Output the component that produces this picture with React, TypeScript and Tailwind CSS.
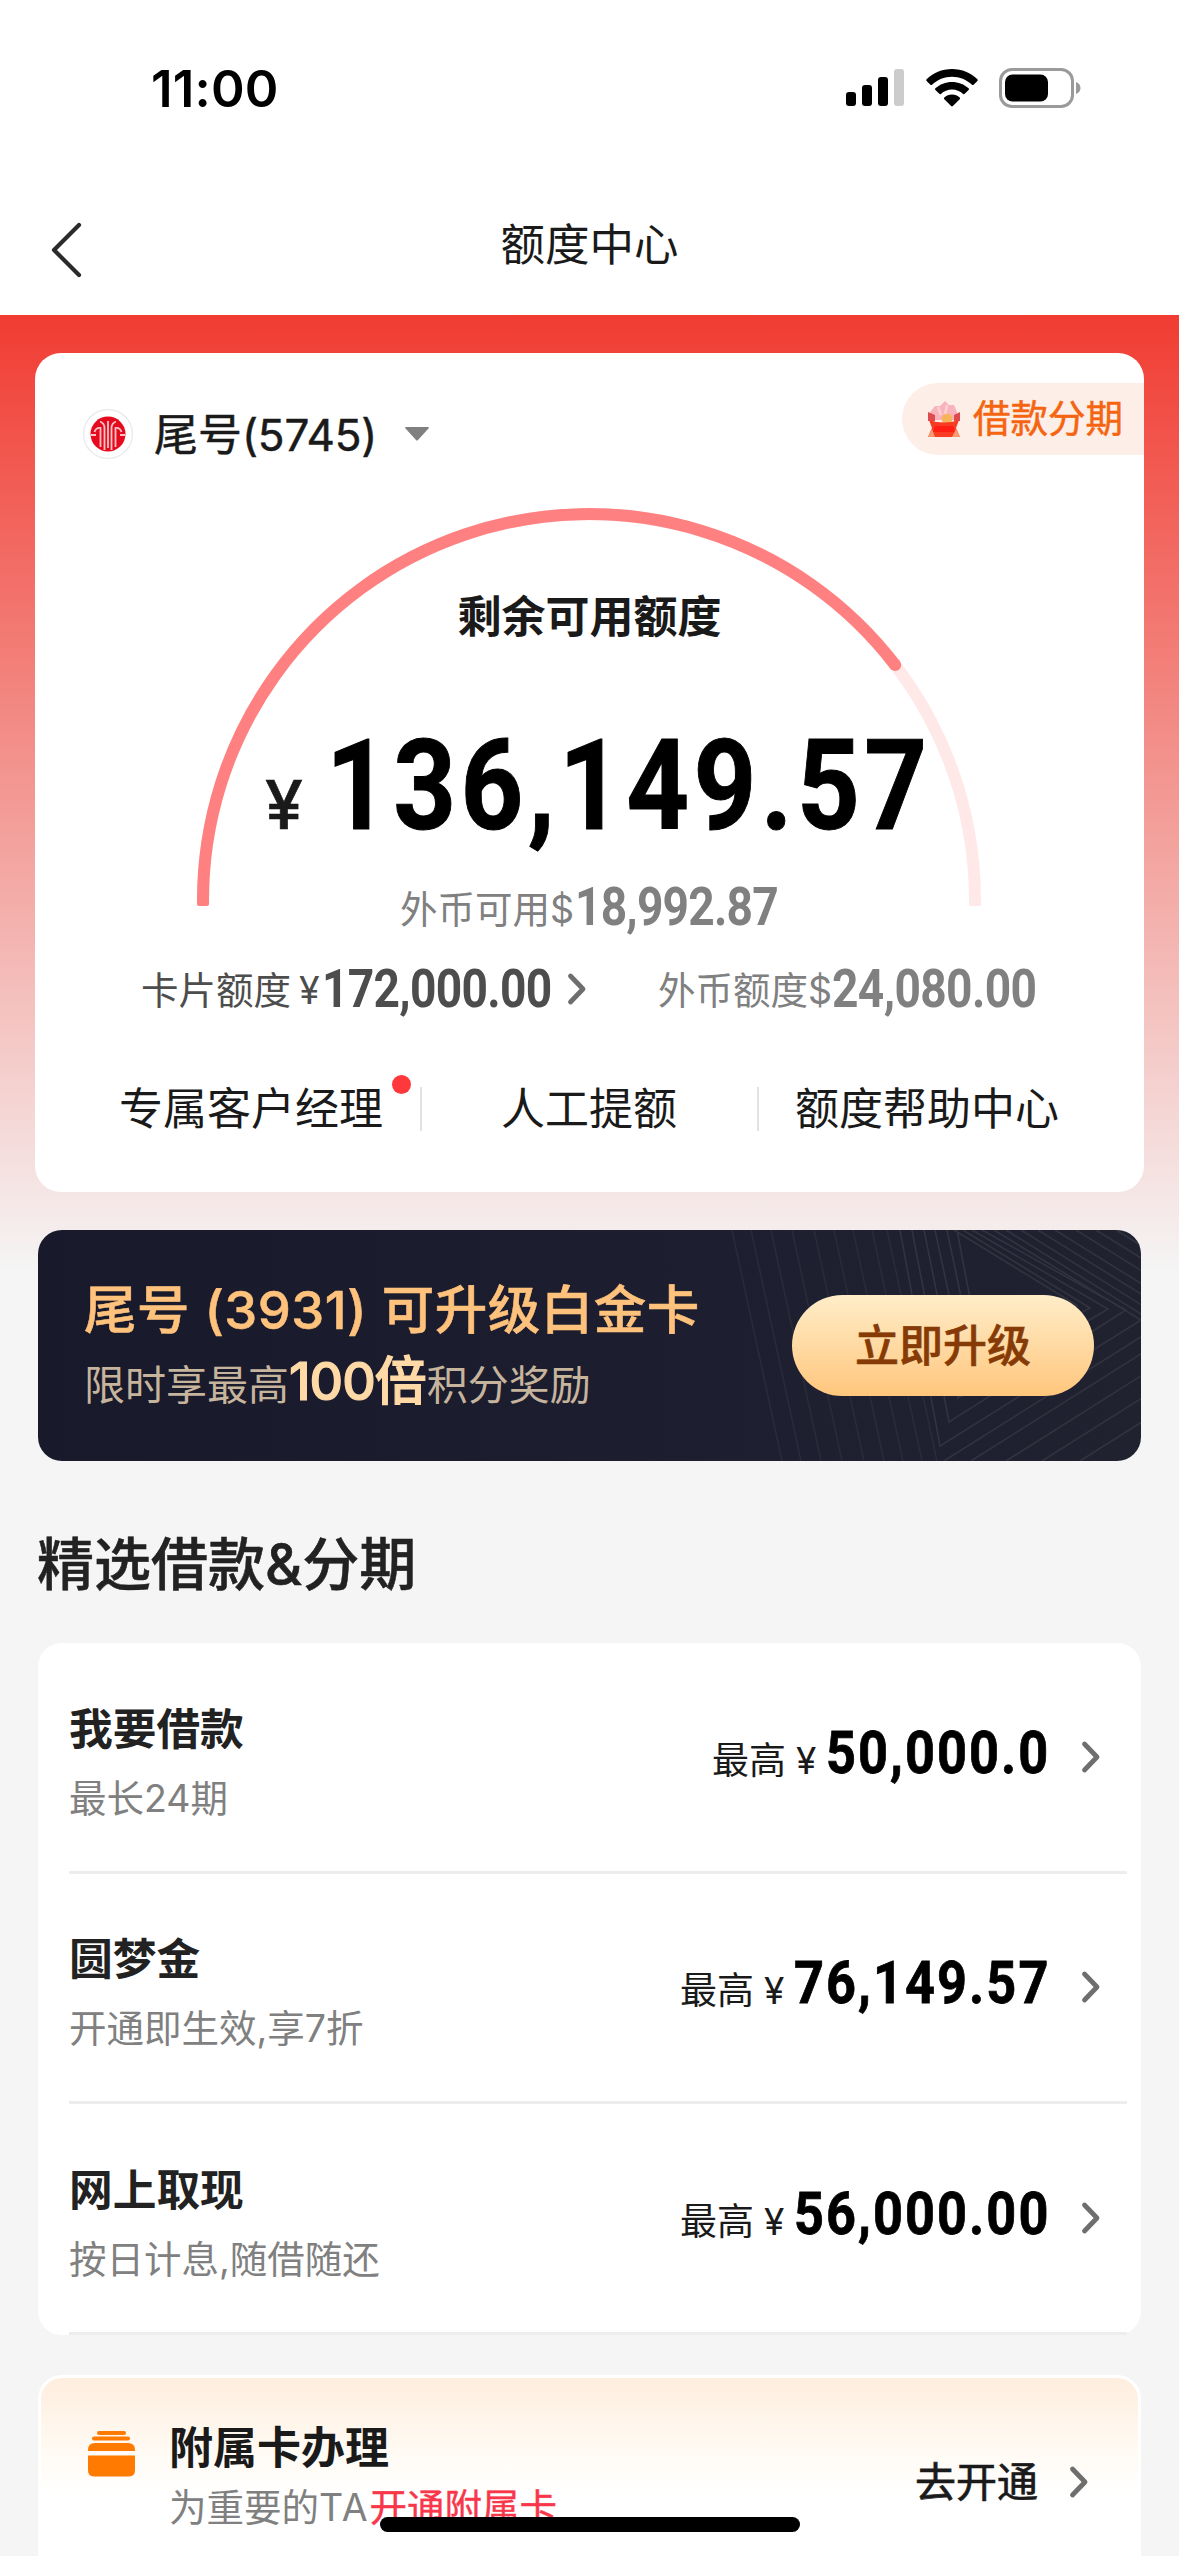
/**
 * 额度中心
 * 状态栏 + 导航栏 + 额度卡片 + 升级横幅 + 借款分期列表 + 附属卡入口
 */
import React from 'react';
import clsx from 'clsx';

interface LoanItem { title: string; desc: string; amount: string; amountClass: string; }

const LOANS: LoanItem[] = [
  { title: '我要借款', desc: '最长24期', amount: '50,000.0', amountClass: 'w-[221px]' },
  { title: '圆梦金', desc: '开通即生效,享7折', amount: '76,149.57', amountClass: 'w-[253px]' },
  { title: '网上取现', desc: '按日计息,随借随还', amount: '56,000.00', amountClass: 'w-[253px]' },
];

/** 横幅背景的斜线，坐标相对横幅左上角 */
const SLANTS = [694, 713, 733, 754, 776, 796, 815, 834, 849];
const RIGHT_TOP = [968, 983, 1000, 1017, 1038, 1058, 1078];
const RIGHT_BOTTOM = [906, 933, 968, 1004, 1042];

/** 数字，横向压窄 */
const Amount: React.FC<{ value: string; className?: string }> = ({ value, className }) => (
  <span className={clsx('block shrink-0 whitespace-nowrap font-[Roboto,sans-serif] font-bold', className)}>
    <span className="inline-block origin-left scale-x-[0.87]">{value}</span>
  </span>
);

const Chevron: React.FC<{ className?: string }> = ({ className }) => (
  <svg viewBox="0 0 20 34" className={clsx('h-[34px] w-[20px] shrink-0', className)} fill="none" stroke="#6e6e6e" strokeWidth="4.800" strokeLinecap="round" strokeLinejoin="round">
    <path d="M3.500 4 L16 17 L3.500 30" />
  </svg>
);

const StatusBar = () => (
  <div className="flex h-[176px] items-center justify-between bg-white pr-[98px] pl-[151px]">
    <span className="text-[51px] leading-none font-semibold tracking-[0.200px] text-black">11:00</span>
    <div className="flex items-center">
      <svg viewBox="0 0 58 38" className="mr-[22px] h-[38px] w-[58px]">
        <rect x="0" y="23" width="10" height="14" rx="3" />
        <rect x="16" y="16" width="10" height="21" rx="3" />
        <rect x="32" y="8" width="10" height="29" rx="3" />
        <rect x="48" y="0" width="10" height="37" rx="3" fill="#cccccc" />
      </svg>
      <svg viewBox="0 0 52 38" className="mr-[21px] h-[38px] w-[52px]">
        <path d="M26 0C36 0 45 3.8 51.4 10.3C51.9 10.8 51.9 11.5 51.4 12L47.6 15.8C47.2 16.2 46.5 16.2 46 15.8C40.6 10.6 33.600 7.700 26 7.700C18.400 7.700 11.400 10.600 6 15.800C5.500 16.200 4.800 16.200 4.400 15.800L.6 12C.1 11.500 .1 10.800 .6 10.300C7 3.800 16 0 26 0Z" />
        <path d="M26 12.900C32.400 12.900 38.200 15.300 42.600 19.300C43.100 19.800 43.100 20.500 42.600 21L38.700 24.800C38.200 25.300 37.600 25.300 37.100 24.900C34.100 22.200 30.200 20.600 26 20.600C21.800 20.600 17.900 22.200 14.900 24.900C14.400 25.300 13.800 25.300 13.300 24.800L9.400 21C8.900 20.500 8.900 19.800 9.400 19.300C13.800 15.300 19.600 12.900 26 12.900Z" />
        <path d="M26 25.600C29 25.600 31.700 26.700 33.700 28.500C34.200 29 34.200 29.700 33.700 30.200L26.900 37C26.400 37.500 25.600 37.500 25.100 37L18.300 30.200C17.800 29.700 17.800 29 18.300 28.500C20.300 26.700 23 25.600 26 25.600Z" />
      </svg>
      <svg viewBox="0 0 82 40" className="h-[40px] w-[82px]">
        <rect x="1.500" y="1.500" width="72" height="37" rx="11.500" fill="none" stroke="#9a9a9a" strokeWidth="3" />
        <rect x="6" y="6.500" width="43" height="27" rx="7.500" />
        <path d="M77 14V26C79.800 25 81.500 22.700 81.500 20C81.500 17.300 79.800 15 77 14Z" fill="#9a9a9a" />
      </svg>
    </div>
  </div>
);

const NavBar = () => (
  <div className="grid h-[139px] grid-cols-[1fr_auto_1fr] items-center bg-white">
    <svg viewBox="0 0 34 58" className="mt-2 ml-[49px] h-[58px] w-[34px]" fill="none" stroke="#2b2b2b" strokeWidth="4.200" strokeLinecap="round" strokeLinejoin="round">
      <path d="M30 4 L5 29 L30 54" />
    </svg>
    <h1 className="text-[44.500px] leading-none text-[#1a1a1a]">额度中心</h1>
  </div>
);

const BankLogo = () => (
  <svg viewBox="0 0 52 52" className="h-[52px] w-[52px] shrink-0">
    <circle cx="26" cy="26" r="24.500" fill="#fff" stroke="#ececf0" strokeWidth="1.500" />
    <circle cx="26" cy="26" r="17.500" fill="#e60a1e" />
    <g fill="none" stroke="#f8c4c6" strokeWidth="1.800">
      <path d="M26 13V40" />
      <path d="M22.500 42V20C22.500 16 20.500 14.500 18 13.500" />
      <path d="M29.500 42V20C29.500 16 31.500 14.500 34 13.500" />
      <path d="M18.500 39V20C15.500 19.500 13.500 21 12.500 24" />
      <path d="M33.500 39V20C36.500 19.500 38.500 21 39.500 24" />
      <path d="M9 27H14M38 27H43" />
    </g>
  </svg>
);

const GiftIcon = () => (
  <svg viewBox="0 0 34 38" className="h-[38px] w-[34px]">
    <path d="M3 12L8 6L13 6L18 1L22 5L27 5L30 12V20H3Z" fill="#f8b4ba" />
    <path d="M11 7L14 15M20 5L18 15" stroke="#fbd0d5" strokeWidth="2.500" />
    <path d="M1 12L8 15V21H1ZM33 12L27 15V21H33Z" fill="#dd4b4e" />
    <circle cx="20" cy="19" r="5.500" fill="#f7b45d" />
    <path d="M2 20Q17 25 32 20L29 28L33 37H1L5 28Z" fill="#fa3b24" />
    <path d="M8 26H26L28 32H6Z" fill="#ff1d14" />
    <path d="M1 37L5 29L8 37ZM33 37L29 29L25 37Z" fill="#fb9a70" />
  </svg>
);

const QuotaGauge = () => (
  <svg viewBox="0 0 786 400" className="absolute top-[154px] left-[161px] h-[400px] w-[786px]" fill="none" strokeWidth="12">
    <path d="M7 393A386 386 0 0 1 779 393" stroke="#ffe8e8" />
    <rect x="773" y="390" width="12" height="9" rx="2" fill="#ffe8e8" />
    <path d="M7 393A386 386 0 0 1 699.200 158" stroke="#ff8080" />
    <circle cx="699.200" cy="158" r="6" fill="#ff8080" />
    <rect x="1" y="390" width="12" height="9" rx="2" fill="#ff8080" />
  </svg>
);

const QuotaCard = () => (
  <section className="relative mx-[35px] h-[839px] overflow-hidden rounded-[26px] bg-white">
    <QuotaGauge />
    <div className="flex h-[132px] items-end justify-between">
      <div className="flex h-[102px] items-center pl-[47px]">
        <BankLogo />
        <span className="mt-[2px] ml-[20px] text-[44px] leading-none text-[#1a1a1a] [-webkit-text-stroke:0.5px]">尾号<span className="tracking-[-0.200px]">(5745)</span></span>
        <svg viewBox="0 0 24 14" className="ml-[28px] h-[14px] w-[24px]"><path d="M1 0H23Q24.500 0 23.500 1.500L13 13Q12 14 11 13L.5 1.500Q-.5 0 1 0Z" fill="#808080" /></svg>
      </div>
      <div className="mb-[30px] flex h-[72px] w-[242px] items-center rounded-l-[36px] bg-[#fdefe7] pl-[25px]">
        <GiftIcon />
        <span className="ml-[12px] text-[37.500px] leading-none text-[#f56410] [-webkit-text-stroke:0.5px]">借款分期</span>
      </div>
    </div>

    <p className="mt-[110px] text-center text-[44px] leading-[44px] font-bold text-[#1a1a1a]">剩余可用额度</p>

    <div className="mt-[84px] flex h-[126px] items-baseline pl-[230px]">
      <span className="w-[61px] text-[68px] leading-[126px] font-medium text-[#1a1a1a] [-webkit-text-stroke:0.6px]">¥</span>
      <Amount value="136,149.57" className="w-[600px] text-[126px] leading-[126px] tracking-[5px] text-black [-webkit-text-stroke:1px]" />
    </div>

    <div className="mt-[28px] flex h-[60px] items-baseline pl-[365px] text-[37.500px] leading-[60px] text-[#808080]">
      <span className="relative -top-[2px] w-[175px] whitespace-nowrap">外币可用$</span>
      <Amount value="18,992.87" className="text-[53px] tracking-[-0.900px]" />
    </div>

    <div className="mt-[22px] flex h-[60px] items-baseline text-[37.500px] leading-[60px]">
      <span className="relative -top-[3px] ml-[106px] w-[158px] text-[#4d4d4d]">卡片额度</span>
      <span className="relative -top-[3px] w-[23px] text-[37.500px] text-[#4d4d4d]">¥</span>
      <Amount value="172,000.00" className="w-[245px] text-[53px] tracking-[-0.800px] text-[#4d4d4d]" />
      <Chevron className="self-center" />
      <span className="relative -top-[3px] ml-[71px] w-[174px] whitespace-nowrap text-[#808080]">外币额度$</span>
      <Amount value="24,080.00" className="text-[53px] tracking-[-0.700px] text-[#808080]" />
    </div>

    <div className="mt-[68px] flex h-[44px] items-center text-[44px] leading-none whitespace-nowrap text-[#1a1a1a]">
      <span className="relative w-[385px] pl-[84px]">专属客户经理<i className="absolute top-[-12px] right-[9px] size-[19px] rounded-full bg-[#ff383c]" /></span>
      <span className="h-[44px] w-[339px] border-x-2 border-[#e2e2e2] pl-[79px]">人工提额</span>
      <span className="pl-[36px]">额度帮助中心</span>
    </div>
  </section>
);

const UpgradeBanner = () => (
  <section className="relative mx-[38px] mt-[38px] flex h-[231px] items-center justify-between overflow-hidden rounded-[24px] bg-linear-to-r from-[#18192b] via-[#1c1d2f] to-[#212230] pr-[47px] pl-[46px]">
    <svg viewBox="0 0 1103 231" className="absolute inset-0 h-full w-full" fill="none" stroke="#32333f" strokeWidth="1.600">
      {SLANTS.map((x) => <path key={x} d={`M${x} 0L${x + 50} 231`} opacity="0.6" />)}
      <path d="M862 0L902 216L1103 90L956 0" />
      <path d="M874 0L911 192L1088 80L944 0" />
      <path d="M886 0L920 168L1070 79L934 0" />
      <path d="M897 0L928 144L1052 78L925 0" />
      <path d="M909 0L934 120M919 0L938 100M916 0L1040 76" />
      {RIGHT_TOP.map((x) => <path key={x} d={`M${x} 0L${x + 230} 143`} />)}
      {RIGHT_BOTTOM.map((x) => <path key={x} d={`M${x} 231L${x + 230} 86`} />)}
    </svg>
    <div className="relative whitespace-nowrap">
      <h2 className="text-[52.500px] leading-[60px] font-medium tracking-[0.500px] text-[#ffc27c] [-webkit-text-stroke:0.6px]">尾号 (3931) 可升级白金卡</h2>
      <p className="mt-[12px] flex h-[60px] items-baseline text-[41px] leading-[60px] text-[#c7b49c]">
        限时享最高<span className="text-[52px] font-medium text-[#ffd9a6] [-webkit-text-stroke:1.2px]"><span className="tracking-[-1px]">100</span>倍</span>积分奖励
      </p>
    </div>
    <button className="relative h-[101px] w-[302px] rounded-full bg-linear-to-b from-[#ffedc8] to-[#ffc67c] text-[44px] leading-none font-medium text-[#863a06] [-webkit-text-stroke:0.6px]">立即升级</button>
  </section>
);

const LoanRow: React.FC<{ item: LoanItem }> = ({ item }) => (
  <li className="ml-[31px] mr-[14px] flex h-[230.500px] items-center border-b-3 border-[#ededed] pr-[26px]">
    <div className="mt-[13px] flex-1">
      <h3 className="text-[43.700px] leading-[50px] font-bold text-[#222]">{item.title}</h3>
      <p className="mt-[21px] text-[37.500px] leading-[46px] text-[#808080]">{item.desc}</p>
    </div>
    <div className="mb-[8px] flex h-[64px] items-baseline leading-[64px] text-[#1a1a1a]">
      <span className="relative top-[1px] text-[37px]">最高</span>
      <span className="relative top-[1px] ml-[10px] w-[30px] text-[37px]">¥</span>
      <Amount value={item.amount} className={clsx('text-[60px] tracking-[2.400px] text-black [-webkit-text-stroke:0.8px]', item.amountClass)} />
    </div>
    <Chevron className="ml-[34px]" />
  </li>
);

const SupplementaryCard = () => (
  <section className="mx-[38px] mt-[40px] flex h-[300px] rounded-[24px] border-3 border-white bg-linear-to-b from-[#feeede] from-0% via-[#fffaf3] via-25% to-white to-40% pt-[45px] pl-[47px]">
    <svg viewBox="0 0 47 46" className="mt-[8px] h-[46px] w-[47px]" fill="#ff7a00">
      <rect x="9" y="0" width="29" height="4" rx="2" />
      <rect x="4" y="5.500" width="38" height="4" rx="2" />
      <path d="M0 20V19Q0 12 7 12H40Q47 12 47 19V20Z" />
      <path d="M0 24.500H47V39Q47 45.500 41 45.500H6Q0 45.500 0 39Z" />
    </svg>
    <div className="ml-[34px] w-[746px]">
      <h3 className="text-[44px] leading-[50px] font-bold text-[#1a1a1a]">附属卡办理</h3>
      <p className="mt-[12px] text-[37.500px] leading-[46px] text-[#808080]">为重要的<span className="tracking-[1.800px]">TA</span><span className="text-[#f8384a] [-webkit-text-stroke:0.4px]">开通附属卡</span></p>
    </div>
    <div className="flex h-[118px] items-center">
      <span className="text-[41px] leading-none text-[#1a1a1a] [-webkit-text-stroke:0.7px]">去开通</span>
      <Chevron className="ml-[31px]" />
    </div>
  </section>
);

export default function App() {
  return (
    <div lang="zh-CN" className="relative h-[2556px] w-[1179px] overflow-hidden bg-[#f5f5f5] font-['Inter','Noto_Sans_CJK_SC',sans-serif]">
      <StatusBar />
      <NavBar />
      <main className="bg-[linear-gradient(to_bottom,#f13c32_0px,#f5f5f5_957px)] pt-[38px]">
        <QuotaCard />
        <UpgradeBanner />
        <h2 className="mt-[72px] pl-[37px] text-[57px] leading-[64px] font-medium text-[#222] [-webkit-text-stroke:0.5px]">精选借款&amp;分期</h2>
        <ul className="mx-[38px] mt-[46px] h-[692px] rounded-[24px] bg-white">
          {LOANS.map((item) => <LoanRow key={item.title} item={item} />)}
        </ul>
        <SupplementaryCard />
      </main>
      <div className="absolute top-[2517px] left-[380px] h-[15px] w-[420px] rounded-full bg-black" />
    </div>
  );
}
